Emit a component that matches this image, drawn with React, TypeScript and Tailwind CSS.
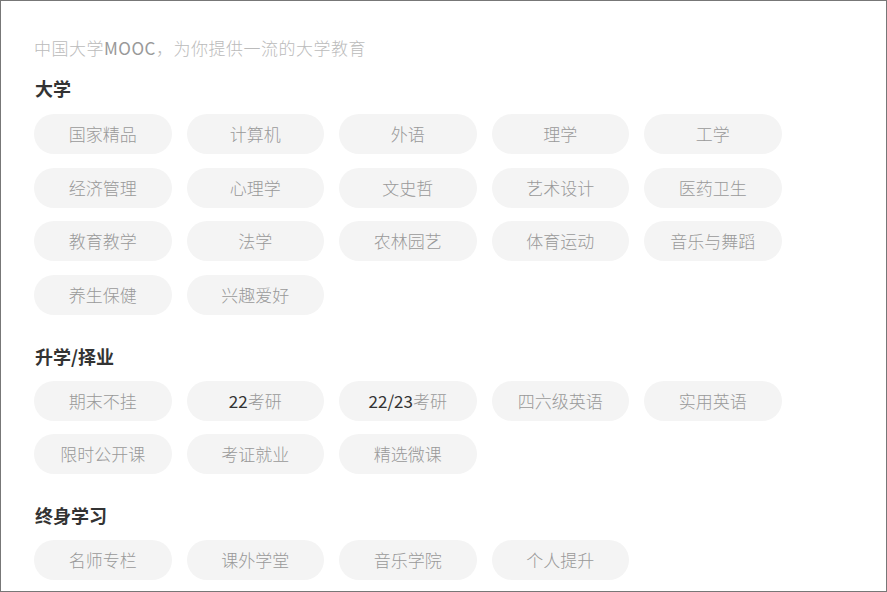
import React from "react";

interface Section {
  title: string;
  tags: string[];
}

const sections: Section[] = [
  {
    title: "大学",
    tags: [
      "国家精品",
      "计算机",
      "外语",
      "理学",
      "工学",
      "经济管理",
      "心理学",
      "文史哲",
      "艺术设计",
      "医药卫生",
      "教育教学",
      "法学",
      "农林园艺",
      "体育运动",
      "音乐与舞蹈",
      "养生保健",
      "兴趣爱好",
    ],
  },
  {
    title: "升学/择业",
    tags: ["期末不挂", "22考研", "22/23考研", "四六级英语", "实用英语", "限时公开课", "考证就业", "精选微课"],
  },
  {
    title: "终身学习",
    tags: ["名师专栏", "课外学堂", "音乐学院", "个人提升"],
  },
];

// digits render darker than the thin CJK glyphs in the reference
const TagLabel = ({ text }: { text: string }) => {
  const parts = text.split(/([0-9/]+)/).filter(Boolean);
  return (
    <>
      {parts.map((p, i) =>
        /^[0-9/]+$/.test(p) ? (
          <span key={i} className="text-[#333] font-normal">
            {p}
          </span>
        ) : (
          <span key={i}>{p}</span>
        )
      )}
    </>
  );
};

const App = () => {
  return (
    <div
      className="w-[887px] h-[592px] border border-[#777] bg-white overflow-hidden px-[33px] pt-[35px]"
      style={{ fontFamily: '"Noto Sans CJK SC", "Noto Sans", sans-serif' }}
    >
      <p className="text-[17px] leading-[24px] font-light text-[#bbb] tracking-[0.5px]">
        中国大学<span className="text-[#999] font-normal">MOOC</span>，为你提供一流的大学教育
      </p>

      {sections.map((section, idx) => (
        <div key={section.title} className={idx === 0 ? "mt-[16px]" : "mt-[29px]"}>
          <h2 className="text-[18px] leading-[24px] font-bold text-[#333] pl-[1px]">{section.title}</h2>
          <div className={`flex flex-wrap gap-x-[15px] gap-y-[13.5px] w-[820px] ${idx === 0 ? "mt-[14px]" : "mt-[13px]"}`}>
            {section.tags.map((tag) => (
              <div
                key={tag}
                className="w-[137.5px] h-10 rounded-full bg-[#f4f4f4] flex items-center justify-center text-[17px] font-light text-[#999]"
              >
                <TagLabel text={tag} />
              </div>
            ))}
          </div>
        </div>
      ))}
    </div>
  );
};

export default App;
